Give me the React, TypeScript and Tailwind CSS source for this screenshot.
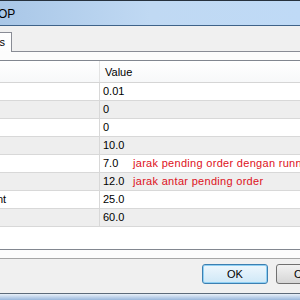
import React from "react";

const rows: { v: string; note?: string; label?: string }[] = [
  { v: "0.01" },
  { v: "0" },
  { v: "0" },
  { v: "10.0" },
  { v: "7.0", note: "jarak pending order dengan running order" },
  { v: "12.0", note: "jarak antar pending order" },
  { v: "25.0", label: "nt" },
  { v: "60.0" },
];

export default function App() {
  return (
    <div
      className="w-[300px] h-[300px] overflow-hidden flex flex-col bg-[#f0f0f0] text-black"
      style={{ fontFamily: '"Liberation Sans", Arial, sans-serif' }}
    >
      {/* title bar */}
      <div className="h-[26px] shrink-0 border-t border-b border-t-[#26313d] border-b-[#3f6389] bg-gradient-to-r from-[#a9c7e7] via-[#c0d9f3] to-[#bfdaf6] flex items-center">
        <span className="-ml-[2px] text-[12px] leading-none pt-[1px]">OP</span>
      </div>
      {/* tab strip */}
      <div className="h-[26px] shrink-0 flex items-end">
        <div className="w-[12px] h-[20px] border-t border-r border-[#898c95] bg-gradient-to-b from-white to-[#fcfcfc] flex items-center justify-end pr-[6px]">
          <span className="text-[11px] leading-none">s</span>
        </div>
        <div className="flex-1 h-full border-b border-[#898c95]"></div>
      </div>
      {/* tab page */}
      <div className="shrink-0 bg-[#fcfcfc] pt-[8px] pb-[8px] border-b border-[#a6a6a6]">
        <div className="border-t border-b border-[#828790] bg-white h-[190px] flex flex-col">
          {/* header */}
          <div className="h-[22px] shrink-0 flex border-b border-[#d5d5d5] bg-gradient-to-b from-white to-[#f7f8f9] text-[11px]">
            <div className="w-[100px] border-r border-[#e3e3e3]"></div>
            <div className="flex-1 flex items-center pl-[5px] pt-[2px]">Value</div>
          </div>
          {rows.map((r, i) => (
            <div
              key={i}
              className={
                "h-[18px] shrink-0 flex border-b border-[#d8d8d8] text-[11px] leading-[17px] " +
                (i % 2 === 1 ? "bg-[#eeeeee]" : "bg-white")
              }
            >
              <div className="w-[100px] border-r border-[#d8d8d8] overflow-hidden whitespace-nowrap">
                {r.label ? <span className="-ml-[3px] inline-block">{r.label}</span> : null}
              </div>
              <div className="flex-1 flex pl-[3px] whitespace-nowrap overflow-hidden">
                <span className="w-[30px] shrink-0">{r.v}</span>
                {r.note ? (
                  <span className="text-[#dd1122] tracking-[0.3px]">{r.note}</span>
                ) : null}
              </div>
            </div>
          ))}
        </div>
      </div>
      {/* buttons */}
      <div className="h-[34px] shrink-0 flex pt-[5px] pl-[202px] gap-[8px]">
        <div className="w-[66px] h-[20px] shrink-0 rounded-[3px] border border-[#3c7fb1] bg-gradient-to-b from-[#eef7fd] to-[#cfe8f7] flex items-center justify-center text-[11px] shadow-[inset_0_0_0_1px_#8fd0f4]">
          OK
        </div>
        <div className="w-[66px] h-[20px] shrink-0 rounded-[3px] border border-[#707070] bg-gradient-to-b from-[#f2f2f2] to-[#d6d6d6] flex items-center justify-start pl-[17px] text-[11px]">
          Cancel
        </div>
      </div>
      {/* bottom edge */}
      <div className="flex-1 border-t border-[#5d6b7a] bg-gradient-to-b from-[#e8f0f9] to-[#9ab8dc]"></div>
    </div>
  );
}
